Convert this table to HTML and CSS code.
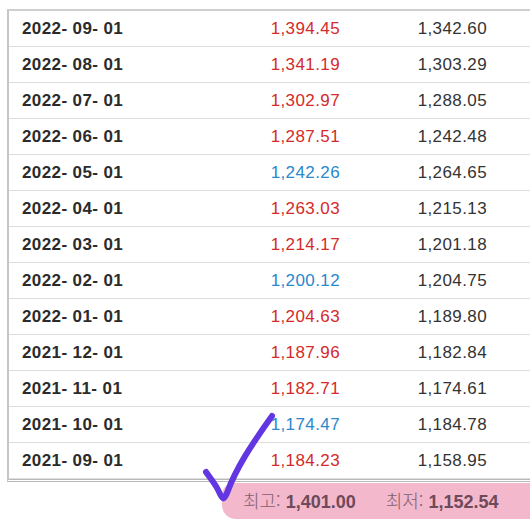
FILE: index.html
```html
<!DOCTYPE html>
<html lang="ko">
<head>
<meta charset="utf-8">
<link rel="stylesheet" href="styles.css">
</head>
<body>
<div class="page">
  <div class="table">
    <div class="row"><span class="date">2022- 09- 01</span><span class="v1 up">1,394.45</span><span class="v2">1,342.60</span></div>
    <div class="row"><span class="date">2022- 08- 01</span><span class="v1 up">1,341.19</span><span class="v2">1,303.29</span></div>
    <div class="row"><span class="date">2022- 07- 01</span><span class="v1 up">1,302.97</span><span class="v2">1,288.05</span></div>
    <div class="row"><span class="date">2022- 06- 01</span><span class="v1 up">1,287.51</span><span class="v2">1,242.48</span></div>
    <div class="row"><span class="date">2022- 05- 01</span><span class="v1 down">1,242.26</span><span class="v2">1,264.65</span></div>
    <div class="row"><span class="date">2022- 04- 01</span><span class="v1 up">1,263.03</span><span class="v2">1,215.13</span></div>
    <div class="row"><span class="date">2022- 03- 01</span><span class="v1 up">1,214.17</span><span class="v2">1,201.18</span></div>
    <div class="row"><span class="date">2022- 02- 01</span><span class="v1 down">1,200.12</span><span class="v2">1,204.75</span></div>
    <div class="row"><span class="date">2022- 01- 01</span><span class="v1 up">1,204.63</span><span class="v2">1,189.80</span></div>
    <div class="row"><span class="date">2021- 12- 01</span><span class="v1 up">1,187.96</span><span class="v2">1,182.84</span></div>
    <div class="row"><span class="date">2021- 11- 01</span><span class="v1 up">1,182.71</span><span class="v2">1,174.61</span></div>
    <div class="row"><span class="date">2021- 10- 01</span><span class="v1 down">1,174.47</span><span class="v2">1,184.78</span></div>
    <div class="row"><span class="date">2021- 09- 01</span><span class="v1 up">1,184.23</span><span class="v2">1,158.95</span></div>
  </div>
  <div class="summary">
    <div class="mark"></div>
    <span class="item"><span class="label">최고:</span> <b>1,401.00</b></span>
    <span class="item"><span class="label">최저:</span> <b>1,152.54</b></span>
  </div>
  <svg class="check" width="90" height="100" viewBox="0 0 90 100">
    <path d="M6 60 C10 66 16 72 20 82 C23 88 24 88 27 81 C36 56 52 32 72 4" fill="none" stroke="#6236e0" stroke-width="6" stroke-linecap="round" stroke-linejoin="round"/>
  </svg>
</div>
</body>
</html>
```
FILE: styles.css
```css
html, body {
  margin: 0;
  padding: 0;
  background: #ffffff;
}
.page {
  position: relative;
  width: 530px;
  height: 528px;
  overflow: hidden;
  font-family: "Liberation Sans", Arial, "Noto Sans CJK KR", sans-serif;
  padding-top: 9px;
  box-sizing: border-box;
}
.table {
  margin-left: 7px;
  width: 560px;
  border-left: 2px solid #c6c6c6;
  border-top: 2px solid #cfcfcf;
  border-bottom: 3px double #b8b8b8;
}
.row {
  display: flex;
  align-items: center;
  height: 35px;
  border-bottom: 1px solid #dedede;
  font-size: 17px;
  letter-spacing: 0.4px;
  color: #333333;
}
.date {
  width: 218px;
  padding-left: 13px;
  font-weight: bold;
  color: #2b2b2b;
}
.v1 {
  width: 100px;
  text-align: right;
}
.v2 {
  width: 147px;
  text-align: right;
  color: #333333;
}
.up { color: #d42a2a; }
.down { color: #2a88cc; }
.summary {
  position: relative;
  display: flex;
  gap: 30px;
  margin-top: 0;
  padding-left: 243px;
  height: 36px;
  align-items: center;
  font-size: 18px;
  color: #7a5666;
}
.label {
  font-family: "Noto Sans CJK KR", sans-serif;
  font-weight: 300;
  color: #80606e;
}
.summary b {
  color: #6e4a5a;
}
.item {
  position: relative;
}
.mark {
  position: absolute;
  left: 222px;
  top: 1px;
  width: 340px;
  height: 36px;
  background: #f4b8cc;
  border-radius: 12px 0 0 14px;
}
.check {
  position: absolute;
  left: 200px;
  top: 412px;
}
```
